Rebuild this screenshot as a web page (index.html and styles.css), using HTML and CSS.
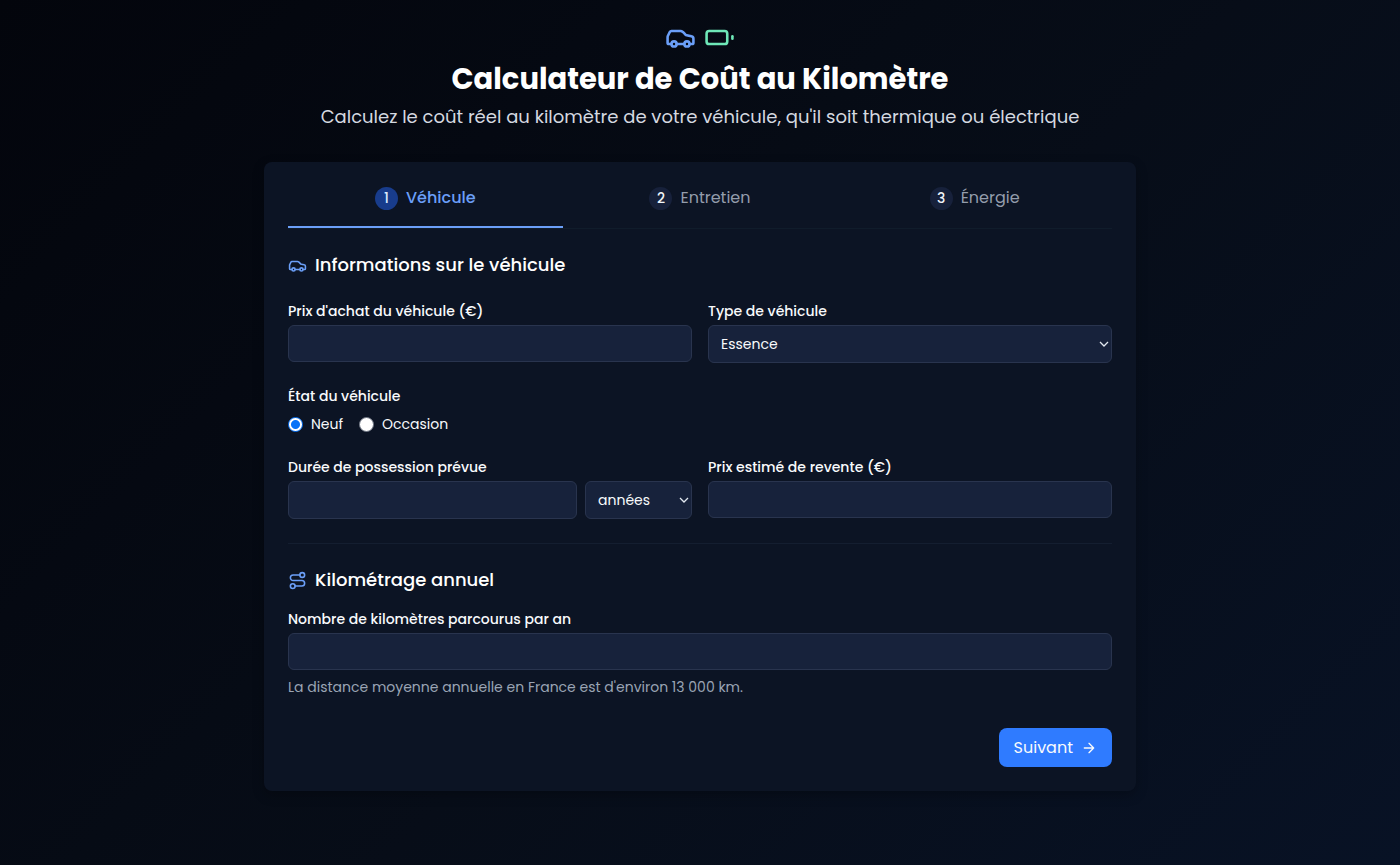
FILE: index.html
```html
<!DOCTYPE html>
<html lang="fr">
<head>
<meta charset="utf-8">
<meta name="viewport" content="width=device-width, initial-scale=1">
<title>Calculateur de Coût au Kilomètre</title>
<link rel="stylesheet" href="styles.css">
</head>
<body>
<svg class="sprite" aria-hidden="true">
  <symbol id="icon-car" viewBox="0 0 24 24">
    <path d="M19 17h2c.6 0 1-.4 1-1v-3c0-.9-.7-1.7-1.5-1.9C18.7 10.6 16 10 16 10s-1.3-1.4-2.2-2.3c-.5-.4-1.1-.7-1.8-.7H5c-.6 0-1.1.4-1.4.9l-1.4 2.9A3.7 3.7 0 0 0 2 12v4c0 .6.4 1 1 1h2"/>
    <circle cx="7" cy="17" r="2"/><path d="M9 17h6"/><circle cx="17" cy="17" r="2"/>
  </symbol>
</svg>
<main class="page">
  <header class="header">
    <div class="header-icons">
      <svg class="icon icon-large icon-blue" aria-hidden="true"><use href="#icon-car"/></svg>
      <svg class="icon icon-large icon-green" viewBox="0 0 24 24" aria-hidden="true"><rect x="2" y="7" width="16" height="10" rx="2"/><path d="M22 11v2"/></svg>
    </div>
    <h1 class="title">Calculateur de Coût au Kilomètre</h1>
    <p class="subtitle">Calculez le coût réel au kilomètre de votre véhicule, qu'il soit thermique ou électrique</p>
  </header>
  <form class="card">
    <nav class="tabs" aria-label="Étapes">
      <button class="tab tab-active" type="button" aria-current="step"><span class="step">1</span>Véhicule</button>
      <button class="tab" type="button"><span class="step">2</span>Entretien</button>
      <button class="tab" type="button"><span class="step">3</span>Énergie</button>
    </nav>
    <section class="section">
      <h2 class="section-title"><svg class="icon icon-blue" aria-hidden="true"><use href="#icon-car"/></svg>Informations sur le véhicule</h2>
      <div class="grid">
        <div class="field">
          <label class="label" for="price">Prix d'achat du véhicule (€)</label>
          <input class="control" id="price" type="text" inputmode="decimal">
        </div>
        <div class="field">
          <label class="label" for="type">Type de véhicule</label>
          <div class="select-wrap">
            <select class="control select" id="type"><option>Essence</option><option>Diesel</option><option>Électrique</option></select>
            <svg class="chevron" viewBox="0 0 10 6" aria-hidden="true"><path d="M1 1l4 4 4-4"/></svg>
          </div>
        </div>
      </div>
      <fieldset class="choices">
        <legend class="label">État du véhicule</legend>
        <div class="choice-row">
          <label class="choice"><input class="radio" type="radio" name="state" checked>Neuf</label>
          <label class="choice"><input class="radio" type="radio" name="state">Occasion</label>
        </div>
      </fieldset>
      <div class="grid">
        <div class="field">
          <label class="label" for="duration">Durée de possession prévue</label>
          <div class="duration">
            <input class="control" id="duration" type="text" inputmode="numeric">
            <div class="select-wrap">
              <select class="control select" aria-label="Unité de durée"><option>années</option><option>mois</option></select>
              <svg class="chevron" viewBox="0 0 10 6" aria-hidden="true"><path d="M1 1l4 4 4-4"/></svg>
            </div>
          </div>
        </div>
        <div class="field">
          <label class="label" for="resale">Prix estimé de revente (€)</label>
          <input class="control" id="resale" type="text" inputmode="decimal">
        </div>
      </div>
    </section>
    <section class="section section-annual">
      <h2 class="section-title"><svg class="icon icon-blue" viewBox="0 0 24 24" aria-hidden="true"><circle cx="6" cy="19" r="3"/><path d="M9 19h8.5a3.5 3.5 0 0 0 0-7h-11a3.5 3.5 0 0 1 0-7H15"/><circle cx="18" cy="5" r="3"/></svg>Kilométrage annuel</h2>
      <div class="field">
        <label class="label" for="distance">Nombre de kilomètres parcourus par an</label>
        <input class="control" id="distance" type="text" inputmode="numeric" aria-describedby="distance-hint">
        <p class="hint" id="distance-hint">La distance moyenne annuelle en France est d'environ 13 000 km.</p>
      </div>
    </section>
    <div class="actions">
      <button class="next" type="button">Suivant<svg class="icon icon-small" viewBox="0 0 24 24" aria-hidden="true"><path d="M5 12h14M12 5l7 7-7 7"/></svg></button>
    </div>
  </form>
</main>
</body>
</html>
```

FILE: styles.css
```css
* { box-sizing: border-box; }

body {
  margin: 0;
  min-height: 100vh;
  background: linear-gradient(135deg, #03050c 0%, #070d18 55%, #081225 100%);
  color: #f8fafc;
  font-family: Poppins, Inter, sans-serif;
  font-size: 14px;
  line-height: 20px;
}

h1, h2, p { margin: 0; }
button, input, select { font: inherit; color: inherit; }

.sprite { position: absolute; width: 0; height: 0; }

.page {
  max-width: 904px;
  margin: 0 auto;
  padding: 22px 16px 32px;
}

.header { text-align: center; }
.header-icons { display: flex; justify-content: center; gap: 8px; }

.icon {
  width: 19px;
  height: 19px;
  flex: none;
  fill: none;
  stroke: currentColor;
  stroke-width: 2;
  stroke-linecap: round;
  stroke-linejoin: round;
}
.icon-large { width: 31px; height: 31px; }
.icon-small { width: 16px; height: 16px; }
.icon-blue { color: #6b9ff8; }
.icon-green { color: #6ee7b7; }

.title {
  margin-top: 6px;
  font-size: 29px;
  line-height: 40px;
  font-weight: 700;
  color: #fff;
}
.subtitle {
  margin-top: 4px;
  font-size: 18px;
  line-height: 28px;
  color: #d5d9e0;
}

.card {
  margin-top: 31px;
  padding: 8px 24px 24px;
  border-radius: 8px;
  background: #0c1424;
  box-shadow: 0 4px 12px rgba(0, 0, 0, 0.25);
}

.tabs {
  display: grid;
  grid-template-columns: repeat(3, 1fr);
  border-bottom: 1px solid #101c2b;
}
.tab {
  display: flex;
  align-items: center;
  justify-content: center;
  gap: 8px;
  height: 58px;
  padding: 0;
  border: 0;
  border-bottom: 2px solid transparent;
  background: none;
  font-size: 16px;
  color: #949dac;
}
.tab-active { border-color: #6b9ff8; color: #6b9ff8; font-weight: 500; }
.step {
  display: grid;
  place-items: center;
  width: 23px;
  height: 23px;
  border-radius: 50%;
  background: #17213b;
  color: #f1f5f9;
  font-size: 14px;
  font-weight: 500;
}
.tab-active .step { background: #183c8c; color: #dbeafe; }

.section { padding-top: 22px; }
.section-annual { margin-top: 24px; border-top: 1px solid #141e30; }
.section-title {
  display: flex;
  align-items: center;
  gap: 8px;
  margin-bottom: 22px;
  font-size: 18px;
  line-height: 28px;
  font-weight: 500;
  color: #fff;
}
.section-annual .section-title { margin-bottom: 15px; }

.grid {
  display: grid;
  grid-template-columns: 1fr 1fr;
  gap: 16px;
  align-items: start;
}
.field { display: flex; flex-direction: column; }
.label { margin-bottom: 4px; padding: 0; font-weight: 500; }
.control {
  width: 100%;
  height: 37px;
  padding: 0 12px;
  border: 1px solid #29344e;
  border-radius: 6px;
  background: #17223b;
}
.select-wrap { display: grid; align-items: center; }
.select-wrap > * { grid-area: 1 / 1; }
.select { appearance: none; height: 38px; }
.chevron {
  justify-self: end;
  width: 10px;
  height: 6px;
  margin-right: 3px;
  fill: none;
  stroke: #e2e8f0;
  stroke-width: 1.3;
  pointer-events: none;
}
.duration { display: grid; grid-template-columns: 1fr 107px; gap: 8px; }
.duration .control { height: 38px; }

.choices { margin: 23px 0 19px; padding: 0; border: 0; }
.choice-row { display: flex; gap: 16px; padding: 4px 0; }
.choice { display: flex; align-items: center; gap: 8px; }
.radio {
  appearance: none;
  width: 15px;
  height: 15px;
  margin: 0;
  border: 1px solid #6b7280;
  border-radius: 50%;
  background: #fff;
}
.radio:checked {
  border-color: #0873f8;
  background: radial-gradient(circle, #0873f8 4px, #fff 5px);
}

.hint { margin-top: 7px; color: #9aa4b4; }
.actions { display: flex; justify-content: flex-end; margin-top: 31px; }
.next {
  display: flex;
  align-items: center;
  gap: 8px;
  height: 39px;
  padding: 0 15px;
  border: 0;
  border-radius: 8px;
  background: #2f7bff;
  color: #f8fafc;
  font-size: 16px;
}

@media (max-width: 640px) {
  .grid { grid-template-columns: 1fr; }
}
```
